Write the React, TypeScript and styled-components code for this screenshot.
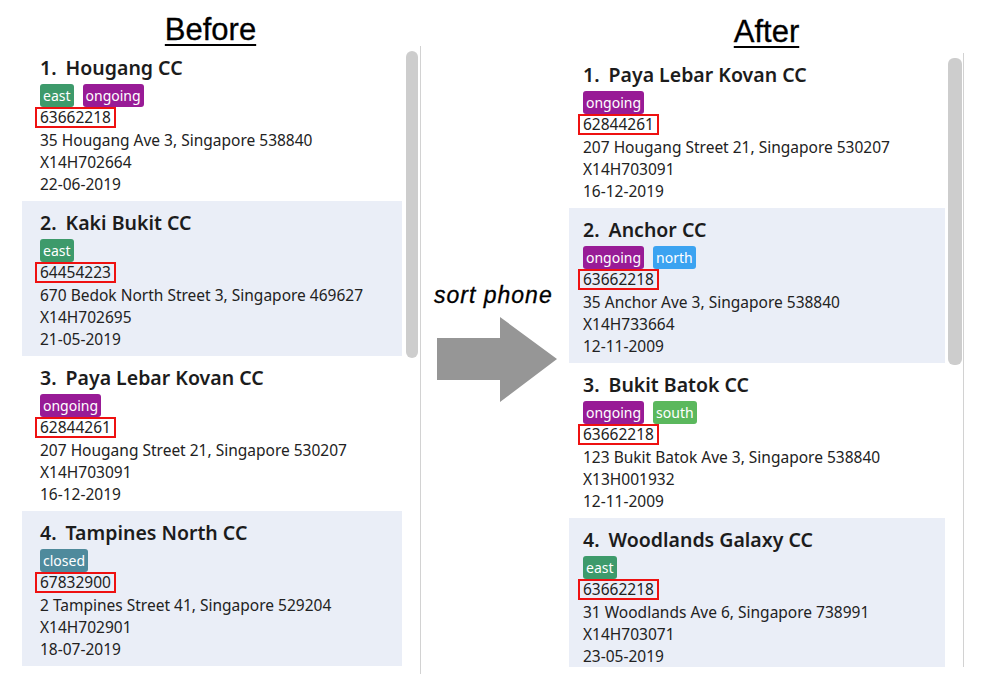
import React from "react";
import styled, { createGlobalStyle } from "styled-components";

const GlobalStyle = createGlobalStyle`
  html, body {
    margin: 0;
    padding: 0;
    background: #ffffff;
  }
  body {
    font-family: "Noto Sans", "Open Sans", sans-serif;
  }
`;

type Tag = "east" | "ongoing" | "closed" | "north" | "south";

type Centre = {
  name: string;
  tags: Tag[];
  phone: string;
  address: string;
  code: string;
  date: string;
};

const before: Centre[] = [
  { name: "Hougang CC", tags: ["east", "ongoing"], phone: "63662218", address: "35 Hougang Ave 3, Singapore 538840", code: "X14H702664", date: "22-06-2019" },
  { name: "Kaki Bukit CC", tags: ["east"], phone: "64454223", address: "670 Bedok North Street 3, Singapore 469627", code: "X14H702695", date: "21-05-2019" },
  { name: "Paya Lebar Kovan CC", tags: ["ongoing"], phone: "62844261", address: "207 Hougang Street 21, Singapore 530207", code: "X14H703091", date: "16-12-2019" },
  { name: "Tampines North CC", tags: ["closed"], phone: "67832900", address: "2 Tampines Street 41, Singapore 529204", code: "X14H702901", date: "18-07-2019" },
];

const after: Centre[] = [
  { name: "Paya Lebar Kovan CC", tags: ["ongoing"], phone: "62844261", address: "207 Hougang Street 21, Singapore 530207", code: "X14H703091", date: "16-12-2019" },
  { name: "Anchor CC", tags: ["ongoing", "north"], phone: "63662218", address: "35 Anchor Ave 3, Singapore 538840", code: "X14H733664", date: "12-11-2009" },
  { name: "Bukit Batok CC", tags: ["ongoing", "south"], phone: "63662218", address: "123 Bukit Batok Ave 3, Singapore 538840", code: "X13H001932", date: "12-11-2009" },
  { name: "Woodlands Galaxy CC", tags: ["east"], phone: "63662218", address: "31 Woodlands Ave 6, Singapore 738991", code: "X14H703071", date: "23-05-2019" },
];

const tagColours: Record<Tag, string> = {
  east: "#3d9a6b",
  ongoing: "#981b96",
  closed: "#4f8a9c",
  north: "#3ba3f1",
  south: "#5bb85d",
};

const Page = styled.div`
  display: flex;
  width: 981px;
  height: 674px;
  overflow: hidden;
`;

const Side = styled.div<{ $width: number }>`
  display: flex;
  flex-direction: column;
  width: ${(p) => p.$width}px;
  flex-shrink: 0;
`;

const Heading = styled.div<{ $height: number; $top: number }>`
  height: ${(p) => p.$height}px;
  display: flex;
  justify-content: center;
  align-items: flex-start;
  padding-top: ${(p) => p.$top}px;
  box-sizing: border-box;
  font-family: "Liberation Sans", Arial, sans-serif;
  font-size: 31px;
  line-height: 34px;
  color: #000;
  text-decoration: underline;
  text-decoration-thickness: 2px;
  text-underline-offset: 4px;
  -webkit-text-stroke: 0.3px #000;
`;

const Panel = styled.div<{ $pad: number; $gap: number }>`
  flex: 1;
  display: flex;
  align-items: flex-start;
  gap: ${(p) => p.$gap}px;
  padding-left: ${(p) => p.$pad}px;
  border-right: 1px solid #d2d2d2;
  overflow: hidden;
`;

const PanelWrap = styled.div<{ $height: number }>`
  display: flex;
  height: ${(p) => p.$height}px;
`;

const List = styled.div<{ $width: number }>`
  width: ${(p) => p.$width}px;
  flex-shrink: 0;
  display: flex;
  flex-direction: column;
`;

const Scrollbar = styled.div<{ $width: number; $top: number; $height: number }>`
  width: ${(p) => p.$width}px;
  height: ${(p) => p.$height}px;
  margin-top: ${(p) => p.$top}px;
  background: #cdcdcd;
  border-radius: 6px;
  flex-shrink: 0;
`;

const Card = styled.div<{ $alt: boolean; $inset: number }>`
  height: 155px;
  flex-shrink: 0;
  box-sizing: border-box;
  padding: 8px ${(p) => p.$inset}px 6px;
  background: ${(p) => (p.$alt ? "#eaeef7" : "#ffffff")};
  color: #222;
`;

const Title = styled.div`
  font-size: 19.5px;
  font-weight: 600;
  line-height: 28px;
  color: #1c1c1c;
  white-space: nowrap;
`;

const Index = styled.span`
  margin-right: 9px;
`;

const Tags = styled.div`
  display: flex;
  gap: 9px;
  margin-top: 2px;
  height: 23px;
`;

const Badge = styled.span<{ $tag: Tag }>`
  display: inline-flex;
  align-items: center;
  height: 23px;
  padding: 0 3px;
  border-radius: 3px;
  background: ${(p) => tagColours[p.$tag]};
  color: #fff;
  font-size: 14px;
`;

const Line = styled.div`
  height: 22px;
  font-size: 15.5px;
  line-height: 22px;
  white-space: nowrap;
`;

const PhoneLine = styled.div`
  height: 22px;
  display: flex;
  align-items: flex-start;
`;

const Phone = styled.span`
  display: inline-block;
  border: 2px solid #ee1111;
  padding: 0 3px;
  margin-left: -5px;
  font-size: 15.5px;
  line-height: 17px;
`;

const Middle = styled.div`
  width: 148px;
  flex-shrink: 0;
  display: flex;
  flex-direction: column;
  padding-top: 282px;
  box-sizing: border-box;
`;

const SortLabel = styled.div`
  margin-left: 13px;
  font-family: "Liberation Sans", Arial, sans-serif;
  font-style: italic;
  font-size: 23px;
  letter-spacing: 1px;
  line-height: 26px;
  color: #000;
  -webkit-text-stroke: 0.3px #000;
`;

const ArrowBox = styled.div`
  margin-left: 16px;
  margin-top: 9px;
`;

const CentreCard = ({ c, i, inset }: { c: Centre; i: number; inset: number }) => (
  <Card $alt={i % 2 === 1} $inset={inset}>
    <Title>
      <Index>{i + 1}.</Index>
      {c.name}
    </Title>
    <Tags>
      {c.tags.map((t) => (
        <Badge key={t} $tag={t}>
          {t}
        </Badge>
      ))}
    </Tags>
    <PhoneLine>
      <Phone>{c.phone}</Phone>
    </PhoneLine>
    <Line>{c.address}</Line>
    <Line>{c.code}</Line>
    <Line>{c.date}</Line>
  </Card>
);

export default function App() {
  return (
    <>
      <GlobalStyle />
      <Page>
        <Side $width={421}>
          <Heading $height={46} $top={13}>Before</Heading>
          <Panel $pad={22} $gap={4}>
            <List $width={380}>
              {before.map((c, i) => (
                <CentreCard key={c.name} c={c} i={i} inset={18} />
              ))}
            </List>
            <Scrollbar $width={12} $top={5} $height={307} />
          </Panel>
        </Side>
        <Middle>
          <SortLabel>sort phone</SortLabel>
          <ArrowBox>
            <svg width="122" height="86" viewBox="0 0 122 86">
              <polygon points="0,21 63,21 63,0 120,42 63,85 63,63 0,63" fill="#969696" />
            </svg>
          </ArrowBox>
        </Middle>
        <Side $width={395}>
          <Heading $height={53} $top={15}>After</Heading>
          <PanelWrap $height={614}>
            <Panel $pad={0} $gap={3}>
              <List $width={376}>
                {after.map((c, i) => (
                  <CentreCard key={c.name} c={c} i={i} inset={14} />
                ))}
              </List>
              <Scrollbar $width={14} $top={5} $height={307} />
            </Panel>
          </PanelWrap>
        </Side>
      </Page>
    </>
  );
}
